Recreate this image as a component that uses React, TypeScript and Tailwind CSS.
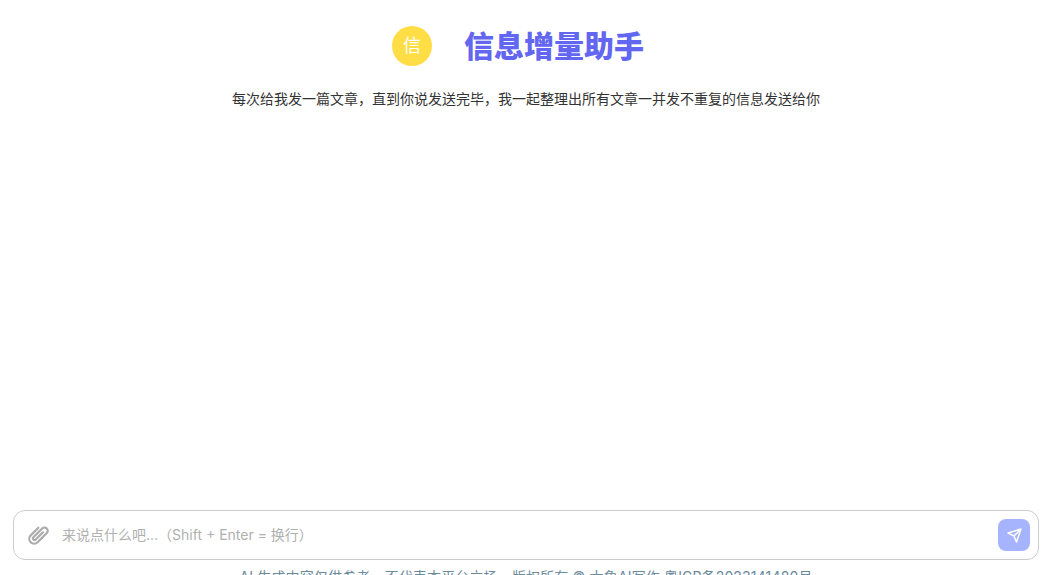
const font = "font-['Inter','Noto_Sans_CJK_SC',sans-serif]";

export default function App() {
  return (
    <div className="h-screen w-full overflow-hidden bg-white">
      <div className={`${font} h-[587px] w-[1052px] flex flex-col text-[#333]`}>
        <header className="flex flex-col items-center pt-[26px] shrink-0">
          <div className="flex items-center gap-8 h-10 pr-4">
            <div className="flex h-10 w-10 items-center justify-center rounded-full bg-[#ffdd44] text-lg text-white">信</div>
            <h1 className="text-[30px] font-black leading-10 text-[#6366f1]">信息增量助手</h1>
          </div>
          <p className="mt-[22px] text-sm leading-[22px]">每次给我发一篇文章，直到你说发送完毕，我一起整理出所有文章一并发不重复的信息发送给你</p>
        </header>
        <main className="flex-1" />
        <div className="shrink-0 px-[13px]">
          <div className="flex h-[50px] items-center rounded-xl border border-[#cccccc] bg-white pl-[13px] pr-2">
            <svg width="26" height="26" viewBox="0 0 24 24" fill="none" stroke="#ababab" strokeWidth="2" strokeLinecap="round" strokeLinejoin="round" className="shrink-0 -ml-[2px]">
              <path transform="rotate(45 12 12)" d="M7.5 7v10a4.5 4.5 0 0 0 9 0V5a3 3 0 0 0-6 0v11.5a1.5 1.5 0 0 0 3 0V7" />
            </svg>
            <div className="ml-[11px] flex-1 text-sm text-[#b0b0b0]">来说点什么吧...（Shift + Enter = 换行）</div>
            <button className="flex h-8 w-8 items-center justify-center rounded-lg bg-[#a5b4fc]">
              <svg width="15" height="15" viewBox="0 0 15 15" fill="none" stroke="#ffffff" strokeWidth="1.5" strokeLinejoin="round" strokeLinecap="round">
                <path d="M1 5 L14 1 L9.5 14 L7 8 Z M7 8 L14 1" />
              </svg>
            </button>
          </div>
        </div>
        <footer className="shrink-0 pt-[7px] text-center text-sm leading-5 tracking-[0.15px] text-[#6b8a9a]">
          AI 生成内容仅供参考，不代表本平台立场，版权所有 © 大象AI写作 粤ICP备2023141480号
        </footer>
      </div>
    </div>
  );
}
